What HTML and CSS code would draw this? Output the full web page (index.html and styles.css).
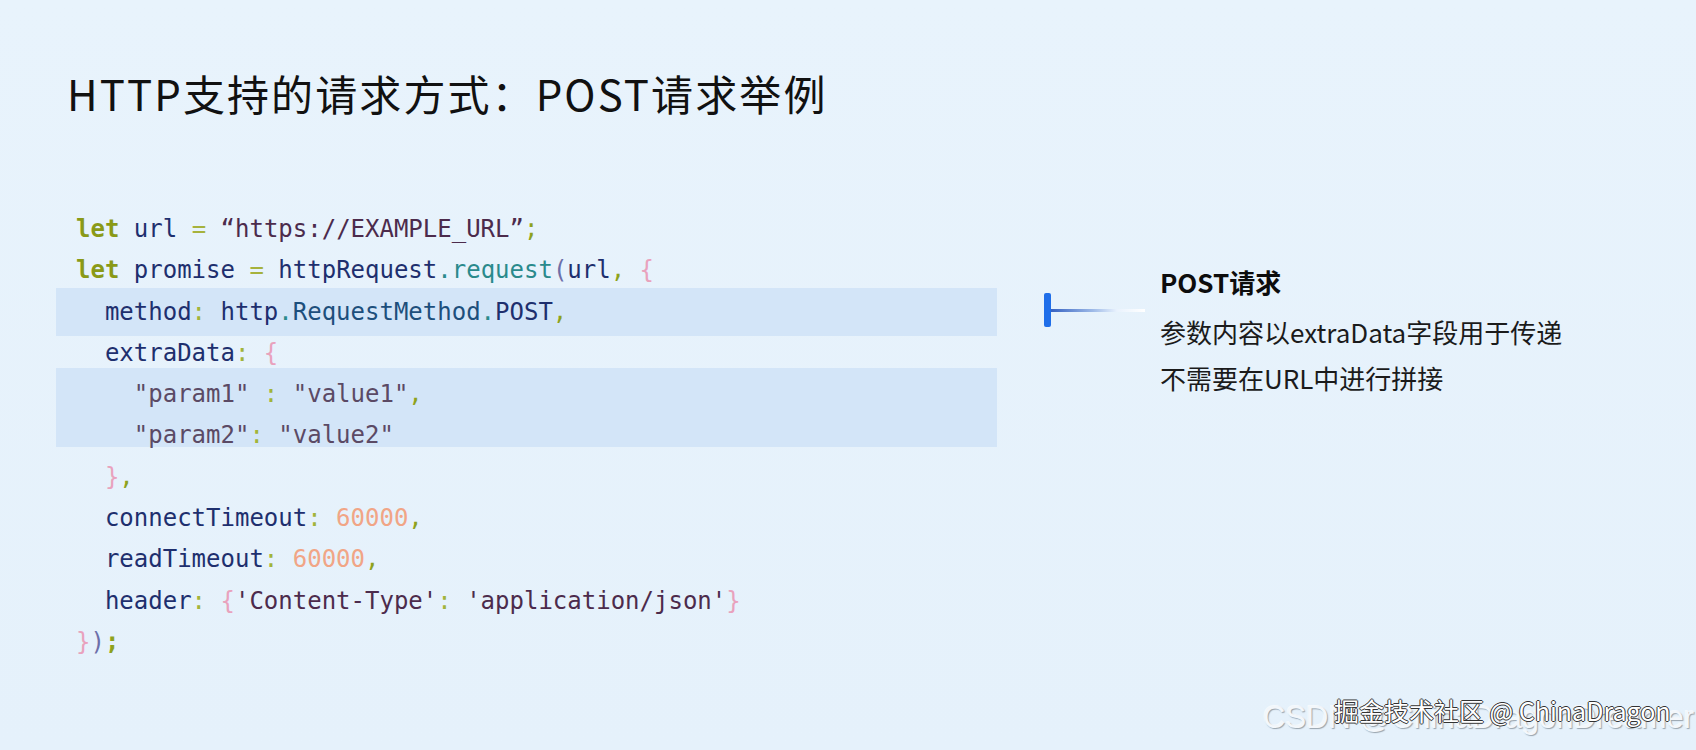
FILE: index.html
```html
<!DOCTYPE html>
<html lang="zh-CN">
<head>
<meta charset="utf-8">
<title>HTTP支持的请求方式：POST请求举例</title>
<link rel="stylesheet" href="styles.css">
</head>
<body>
<div class="slide">
  <h1 class="title">HTTP支持的请求方式：POST请求举例</h1>
  <div class="main">
    <div class="code">
      <div class="line"><span class="kw">let</span> <span class="id">url</span> <span class="op">=</span> <span class="str">“https://EXAMPLE_URL”</span><span class="pn">;</span></div>
      <div class="line"><span class="kw">let</span> <span class="id">promise</span> <span class="op">=</span> <span class="id">httpRequest</span><span class="fn">.request</span><span class="pa">(</span><span class="id">url</span><span class="pn">,</span> <span class="br">{</span></div>
      <div class="hl hl1">
        <div class="line">  <span class="id">method</span><span class="co">:</span> <span class="id">http</span><span class="fn">.</span><span class="ty">RequestMethod</span><span class="fn">.</span><span class="id">POST</span><span class="pn">,</span></div>
      </div>
      <div class="line">  <span class="id">extraData</span><span class="co">:</span> <span class="br">{</span></div>
      <div class="hl hl2">
        <div class="line">    <span class="ps">"param1"</span> <span class="co">:</span> <span class="ps">"value1"</span><span class="pn">,</span></div>
        <div class="line">    <span class="ps">"param2"</span><span class="co">:</span> <span class="ps">"value2"</span></div>
      </div>
      <div class="line">  <span class="br">}</span><span class="pn">,</span></div>
      <div class="line">  <span class="id">connectTimeout</span><span class="co">:</span> <span class="num">60000</span><span class="pn">,</span></div>
      <div class="line">  <span class="id">readTimeout</span><span class="co">:</span> <span class="num">60000</span><span class="pn">,</span></div>
      <div class="line">  <span class="id">header</span><span class="co">:</span> <span class="br">{</span><span class="str">'Content-Type'</span><span class="co">:</span> <span class="str">'application/json'</span><span class="br">}</span></div>
      <div class="line"><span class="br">}</span><span class="pa">)</span><span class="pn kwb">;</span></div>
    </div>
    <div class="connector">
      <div class="marker"></div>
      <div class="lead"></div>
    </div>
    <div class="note">
      <div class="note-title">POST请求</div>
      <div class="note-line">参数内容以extraData字段用于传递</div>
      <div class="note-line">不需要在URL中进行拼接</div>
    </div>
  </div>
  <div class="watermark">
    <span class="wm-csdn">CSDN @ChinaDragonDreamer</span>
    <span class="wm-juejin">掘金技术社区 @ ChinaDragon</span>
  </div>
</div>
</body>
</html>
```
FILE: styles.css
```css
html, body {
  margin: 0;
  padding: 0;
}
body {
  background: #e6f1fb;
  width: 1696px;
  height: 750px;
  overflow: hidden;
}
.slide {
  position: relative;
  width: 1696px;
  height: 750px;
  background: linear-gradient(180deg, #e8f3fc 0%, #e5f1fb 100%);
}
.title {
  margin: 0;
  padding: 67px 0 0 67px;
  height: 139px;
  box-sizing: border-box;
  font-family: "Noto Sans CJK SC", "Noto Sans", sans-serif;
  font-weight: 400;
  font-size: 42px;
  line-height: 52px;
  color: #111;
  letter-spacing: 2.1px;
}
.main {
  margin-top: 70px;
  display: flex;
  align-items: flex-start;
}
.code {
  margin-left: 56px;
  width: 941px;
  font-family: "DejaVu Sans Mono", "Liberation Mono", monospace;
  font-size: 24px;
  line-height: 41.3px;
  color: #1e2f6e;
}
.line {
  padding-left: 20px;
  white-space: pre;
  height: 41.3px;
}
.hl {
  background: #d3e5f8;
}
.hl1 {
  margin: -3.5px 0;
  padding: 3.5px 0;
}
.hl2 {
  box-sizing: border-box;
  margin-top: -6px;
  padding-top: 6px;
  height: 79px;
  margin-bottom: 9.6px;
}
.kw { color: #8a9a17; font-weight: bold; }
.kwb { font-weight: bold; }
.id { color: #1e2f6e; }
.op { color: #a6b23c; }
.str { color: #4c2b4c; }
.pn { color: #8ea21d; }
.fn { color: #2a8a8c; }
.pa { color: #6d6fa9; }
.br { color: #e9a2bd; }
.co { color: #a2b43a; }
.ps { color: #5b4a65; }
.num { color: #f1a586; }
.ty { color: #1d4f7c; }

.connector {
  margin-left: 47px;
  margin-top: 84px;
  display: flex;
  align-items: center;
}
.marker {
  width: 7px;
  height: 34px;
  border-radius: 2px;
  background: #1f6ee9;
}
.lead {
  width: 94px;
  height: 3px;
  background: linear-gradient(90deg, #3662c2 0%, #9fbbe8 45%, #e9f2fd 70%, #ffffff 100%);
}
.note {
  margin-left: 15px;
  margin-top: 46px;
  font-family: "Noto Sans CJK SC", "Noto Sans", sans-serif;
  font-size: 26px;
  line-height: 45.5px;
  color: #1b1b1b;
}
.note-title {
  font-weight: bold;
  color: #0d0d0d;
  line-height: 54px;
}
.watermark {
  position: absolute;
  right: 0;
  bottom: 0;
  width: 440px;
  height: 70px;
}
.wm-csdn {
  position: absolute;
  left: 7px;
  top: 20px;
  white-space: nowrap;
  font-family: "Liberation Sans", sans-serif;
  font-size: 31px;
  color: #f3f7fb;
  text-shadow: 1px 1px 1px rgba(90, 100, 110, 0.55), -1px -1px 0 rgba(255,255,255,0.6);
}
.wm-juejin {
  position: absolute;
  left: 78px;
  top: 12px;
  white-space: nowrap;
  font-family: "Noto Sans CJK SC", sans-serif;
  font-size: 25px;
  color: #ffffff;
  text-shadow: 1px 0 0 #333, -1px 0 0 #333, 0 1px 0 #333, 0 -1px 0 #333;
}
```
